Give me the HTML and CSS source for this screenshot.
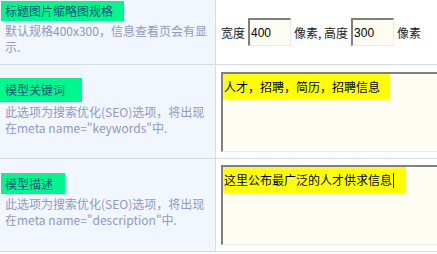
FILE: index.html
```html
<!DOCTYPE html>
<html lang="zh">
<head>
    <meta charset="UTF-8">
    <meta name="viewport" content="width=device-width, initial-scale=1.0">
    <title>模型设置</title>
    <link rel="stylesheet" href="styles.css">
</head>
<body>

    <div class="form">
        <div class="cell-head">
            <span class="label label-1">标题图片缩略图规格</span>
            <p class="hint">默认规格400x300，信息查看页会有显示.</p>
        </div>
        <div class="cell-field">
            宽度 <input class="size-input" type="text" value="400"> 像素, 高度 <input class="size-input" type="text" value="300"> 像素
        </div>

        <div class="cell-head">
            <span class="label label-2">模型关键词</span>
            <p class="hint">此选项为搜索优化(SEO)选项，将出现在meta name="keywords"中.</p>
        </div>
        <div class="cell-field">
            <div class="area"><span class="mark mark-1">人才，招聘，简历，招聘信息</span></div>
        </div>

        <div class="cell-head">
            <span class="label label-3">模型描述</span>
            <p class="hint">此选项为搜索优化(SEO)选项，将出现在meta name="description"中.</p>
        </div>
        <div class="cell-field">
            <div class="area"><span class="mark mark-2">这里公布最广泛的人才供求信息<span class="caret"></span></span></div>
        </div>
    </div>

</body>
</html>
```

FILE: styles.css
```css
* {
    margin: 0;
    padding: 0;
    box-sizing: border-box;
    font-family: 'Noto Sans CJK SC', 'DejaVu Sans', sans-serif;
}

body {
    background: #fff;
    font-size: 12px;
    overflow: hidden;
}

.form {
    display: grid;
    grid-template-columns: 216px 221px;
    grid-template-rows: 65px 94px 93px;
}

.cell-head {
    background: #f2f6fe;
    border-right: 1px solid #d5dce9;
    border-bottom: 1px solid #d5dce9;
    padding: 0 4px 9px 5px;
    display: flex;
    flex-direction: column;
    justify-content: center;
    align-items: flex-start;
}

.cell-field {
    border-bottom: 1px solid #d5dce9;
    padding-left: 5px;
    display: flex;
    align-items: center;
    color: #222;
    white-space: nowrap;
    overflow: hidden;
}

.label {
    display: inline-block;
    margin-left: -4px;
    padding-left: 4px;
    background: #00f78c;
    color: #1d4c7c;
    line-height: 20px;
}

.label-1 {
    padding-right: 11px;
}

.label-2 {
    margin-left: -5px;
    padding-left: 5px;
    padding-right: 17px;
    line-height: 24px;
}

.label-3 {
    padding-right: 12px;
    line-height: 21px;
}

.hint {
    color: #8e9ac3;
    line-height: 16px;
    margin-top: 2px;
}

.size-input {
    width: 43px;
    height: 28px;
    margin: 0 3px;
    padding: 0 1px;
    background: #fdfdf3;
    border-style: solid;
    border-width: 2px 1px 1px 2px;
    border-color: #80807a #ebebe4 #ebebe4 #80807a;
    font-size: 12px;
    font-family: 'Liberation Sans', sans-serif;
    color: #000;
    outline: none;
}

.area {
    flex-shrink: 0;
    width: 260px;
    height: 80px;
    background: #fdfdf3;
    border-style: solid;
    border-width: 2px 0 1px 2px;
    border-color: #808080 #ebebe4 #ebebe4 #808080;
}

.mark {
    display: inline-block;
    background: #ffff00;
    color: #000;
    line-height: 25px;
    padding: 0 10px 0 1px;
}

.mark-2 {
    padding-right: 12px;
    line-height: 26px;
}

.caret {
    display: inline-block;
    width: 1px;
    height: 15px;
    margin-left: 1px;
    background: #000;
    vertical-align: -3px;
}
```
